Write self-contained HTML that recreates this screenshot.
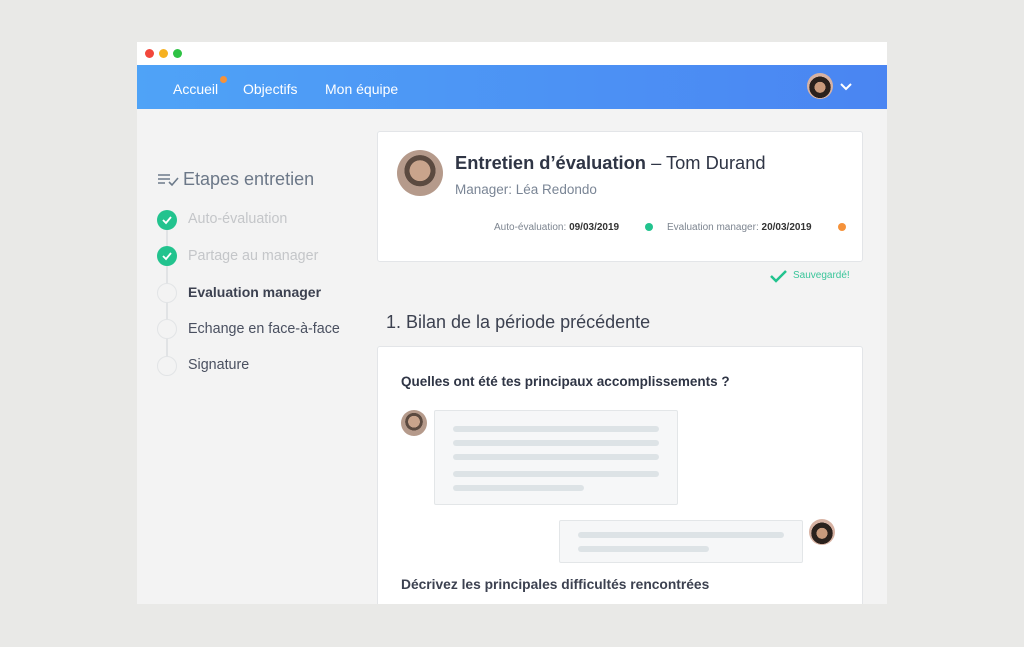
<!DOCTYPE html>
<html><head><meta charset="utf-8"><style>
*{margin:0;padding:0;box-sizing:border-box}
body{width:1024px;height:647px;background:#e9e9e7;font-family:"Liberation Sans",sans-serif;position:relative;overflow:hidden}
.a{position:absolute}
.win{left:137px;top:42px;width:750px;height:562px;background:#f3f3f3;overflow:hidden}
.tb{left:0;top:0;width:750px;height:23px;background:#fff}
.dot{width:9px;height:9px;border-radius:50%;top:7px}
.nav{left:0;top:23px;width:750px;height:44px;background:linear-gradient(90deg,#4fa3f7,#4a85f2)}
.nav span{position:absolute;color:#fff;font-size:14px;top:16px}
.card{background:#fff;border:1px solid #e3e5e8;border-radius:3px}
.step{font-size:14.3px;left:51px}
.circ{left:20px;width:20px;height:20px;border-radius:50%}
.done{background:#22c38e}
.todo{border:1.5px solid #e2e4e6;background:#f3f3f3}
.ln{height:6px;border-radius:3px;background:#dde3e6}
.av{border-radius:50%;background:radial-gradient(circle at 50% 45%,#c9a48c 0 30%,#5b4a40 31% 45%,#b59a8b 46%)}
.avf{border-radius:50%;background:radial-gradient(circle at 50% 55%,#c99a7c 0 28%,#2a211d 29% 55%,#d7b2a3 56%)}
</style></head><body>
<div class="a win">
 <div class="a tb"></div>
 <div class="a dot" style="left:8px;background:#f2473c"></div>
 <div class="a dot" style="left:22px;background:#f6b121"></div>
 <div class="a dot" style="left:36px;background:#2ec244"></div>
 <div class="a nav">
  <span style="left:36px">Accueil</span>
  <div class="a" style="left:83px;top:11px;width:7px;height:7px;border-radius:50%;background:#f5923a"></div>
  <span style="left:106px">Objectifs</span>
  <span style="left:188px">Mon équipe</span>
  <div class="a avf" style="left:670px;top:8px;width:26px;height:26px"></div>
  <svg class="a" style="left:703px;top:17px" width="12" height="9"><path d="M1 2l5 5 5-5" stroke="#fff" stroke-width="2" fill="none"/></svg>
 </div>
 <svg class="a" style="left:21px;top:131px" width="22" height="14"><path d="M0 2h12M0 6h12M0 10h7M11 9l3 3 6-7" stroke="#6c7a8a" stroke-width="1.6" fill="none"/></svg>
 <div class="a" style="left:46px;top:127px;font-size:18px;color:#6c7888">Etapes entretien</div>
 <div class="a" style="left:29px;top:186px;width:1.5px;height:140px;background:#e1e3e5"></div>
 <div class="a circ done" style="top:168px"></div>
 <div class="a circ done" style="top:204px"></div>
 <div class="a circ todo" style="top:241px"></div>
 <div class="a circ todo" style="top:277px"></div>
 <div class="a circ todo" style="top:314px"></div>
 <svg class="a" style="left:20px;top:168px" width="20" height="60"><path d="M6 10l3 3 5-6M6 46l3 3 5-6" stroke="#fff" stroke-width="1.8" fill="none"/></svg>
 <div class="a step" style="top:169px;color:#c4c6c9">Auto-évaluation</div>
 <div class="a step" style="top:206px;color:#c4c6c9">Partage au manager</div>
 <div class="a step" style="top:242px;color:#3c4150;font-weight:bold;font-size:14px">Evaluation manager</div>
 <div class="a step" style="top:279px;color:#4a5060">Echange en face-à-face</div>
 <div class="a step" style="top:315px;color:#4a5060">Signature</div>

 <div class="a card" style="left:240px;top:89px;width:486px;height:131px">
  <div class="a av" style="left:19px;top:18px;width:46px;height:46px"></div>
  <div class="a" style="left:77px;top:20px;font-size:18.3px;color:#2f3545"><b>Entretien d’évaluation</b> – Tom Durand</div>
  <div class="a" style="left:77px;top:50px;font-size:13.5px;color:#7a8595">Manager: Léa Redondo</div>
  <div class="a" style="left:116px;top:90px;font-size:10px;color:#7d8590">Auto-évaluation: <b style="color:#333">09/03/2019</b></div>
  <div class="a" style="left:267px;top:91px;width:8px;height:8px;border-radius:50%;background:#22c38e"></div>
  <div class="a" style="left:289px;top:90px;font-size:10px;color:#7d8590">Evaluation manager: <b style="color:#333">20/03/2019</b></div>
  <div class="a" style="left:460px;top:91px;width:8px;height:8px;border-radius:50%;background:#f5923a"></div>
 </div>
 <svg class="a" style="left:633px;top:227px" width="18" height="14"><path d="M1 7l5 5 10-10" stroke="#22c38e" stroke-width="2.5" fill="none"/></svg>
 <div class="a" style="left:656px;top:228px;font-size:10px;color:#3ac59a">Sauvegardé!</div>
 <div class="a" style="left:249px;top:270px;font-size:18px;color:#3c4150">1. Bilan de la période précédente</div>

 <div class="a card" style="left:240px;top:304px;width:486px;height:300px">
  <div class="a" style="left:23px;top:27px;font-size:13.5px;font-weight:bold;color:#2f3545">Quelles ont été tes principaux accomplissements ?</div>
  <div class="a av" style="left:23px;top:63px;width:26px;height:26px"></div>
  <div class="a" style="left:56px;top:63px;width:244px;height:95px;background:#f6f7f8;border:1px solid #e3e6e8;border-radius:2px">
   <div class="a ln" style="left:18px;top:15px;width:206px"></div>
   <div class="a ln" style="left:18px;top:29px;width:206px"></div>
   <div class="a ln" style="left:18px;top:43px;width:206px"></div>
   <div class="a ln" style="left:18px;top:60px;width:206px"></div>
   <div class="a ln" style="left:18px;top:74px;width:131px"></div>
  </div>
  <div class="a" style="left:181px;top:173px;width:244px;height:43px;background:#f6f7f8;border:1px solid #e3e6e8;border-radius:2px">
   <div class="a ln" style="left:18px;top:11px;width:206px"></div>
   <div class="a ln" style="left:18px;top:25px;width:131px"></div>
  </div>
  <div class="a avf" style="left:431px;top:172px;width:26px;height:26px"></div>
  <div class="a" style="left:23px;top:230px;font-size:13.8px;font-weight:bold;color:#3c4150">Décrivez les principales difficultés rencontrées</div>
 </div>
</div>
</body></html>
